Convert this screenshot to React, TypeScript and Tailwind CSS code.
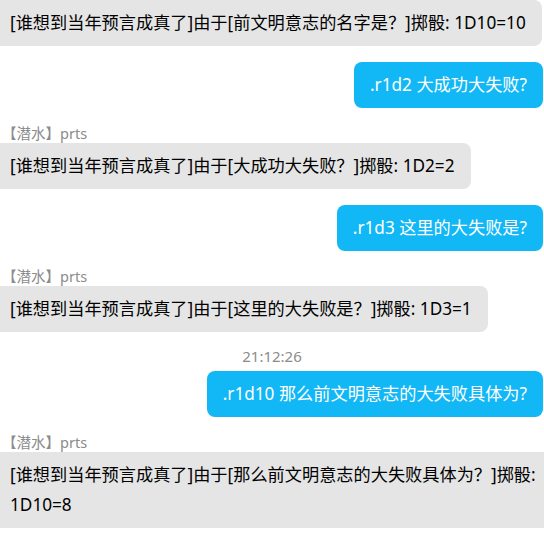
import React from "react";

const font = { fontFamily: '"Noto Sans", "Noto Sans CJK SC", sans-serif' };

function Gray({ children, className = "" }: { children: React.ReactNode; className?: string }) {
  return (
    <div className={"ml-[-6px] self-start rounded-lg bg-[#e5e5e5] px-4 py-2 text-[17.2px] leading-[30px] text-black " + className}>
      {children}
    </div>
  );
}

function Blue({ children, className = "" }: { children: React.ReactNode; className?: string }) {
  return (
    <div className={"mr-px self-end whitespace-nowrap rounded-lg bg-[#12b7f5] px-4 py-2 text-[17.2px] leading-[30px] text-white " + className}>
      {children}
    </div>
  );
}

function Label({ className = "" }: { className?: string }) {
  return <div className={"ml-[2px] text-[14.5px] leading-[19px] text-[#8c8c8c] " + className}>【潜水】prts</div>;
}

export default function App() {
  return (
    <div className="flex h-[548px] w-[544px] flex-col overflow-hidden bg-white" style={font}>
      <Gray className="whitespace-nowrap">[谁想到当年预言成真了]由于[前文明意志的名字是？]掷骰: 1D10=10</Gray>
      <Blue className="mt-4">.r1d2 大成功大失败?</Blue>
      <Label className="mt-4" />
      <Gray className="whitespace-nowrap">[谁想到当年预言成真了]由于[大成功大失败？]掷骰: 1D2=2</Gray>
      <Blue className="mt-4">.r1d3 这里的大失败是?</Blue>
      <Label className="mt-4" />
      <Gray className="whitespace-nowrap">[谁想到当年预言成真了]由于[这里的大失败是？]掷骰: 1D3=1</Gray>
      <div className="mt-[14px] text-center text-[15px] leading-[20px] text-[#8c8c8c]">21:12:26</div>
      <Blue className="mt-[5px]">.r1d10 那么前文明意志的大失败具体为?</Blue>
      <Label className="mt-4" />
      <Gray className="w-[562px] shrink-0">[谁想到当年预言成真了]由于[那么前文明意志的大失败具体为？]掷骰: 1D10=8</Gray>
    </div>
  );
}
